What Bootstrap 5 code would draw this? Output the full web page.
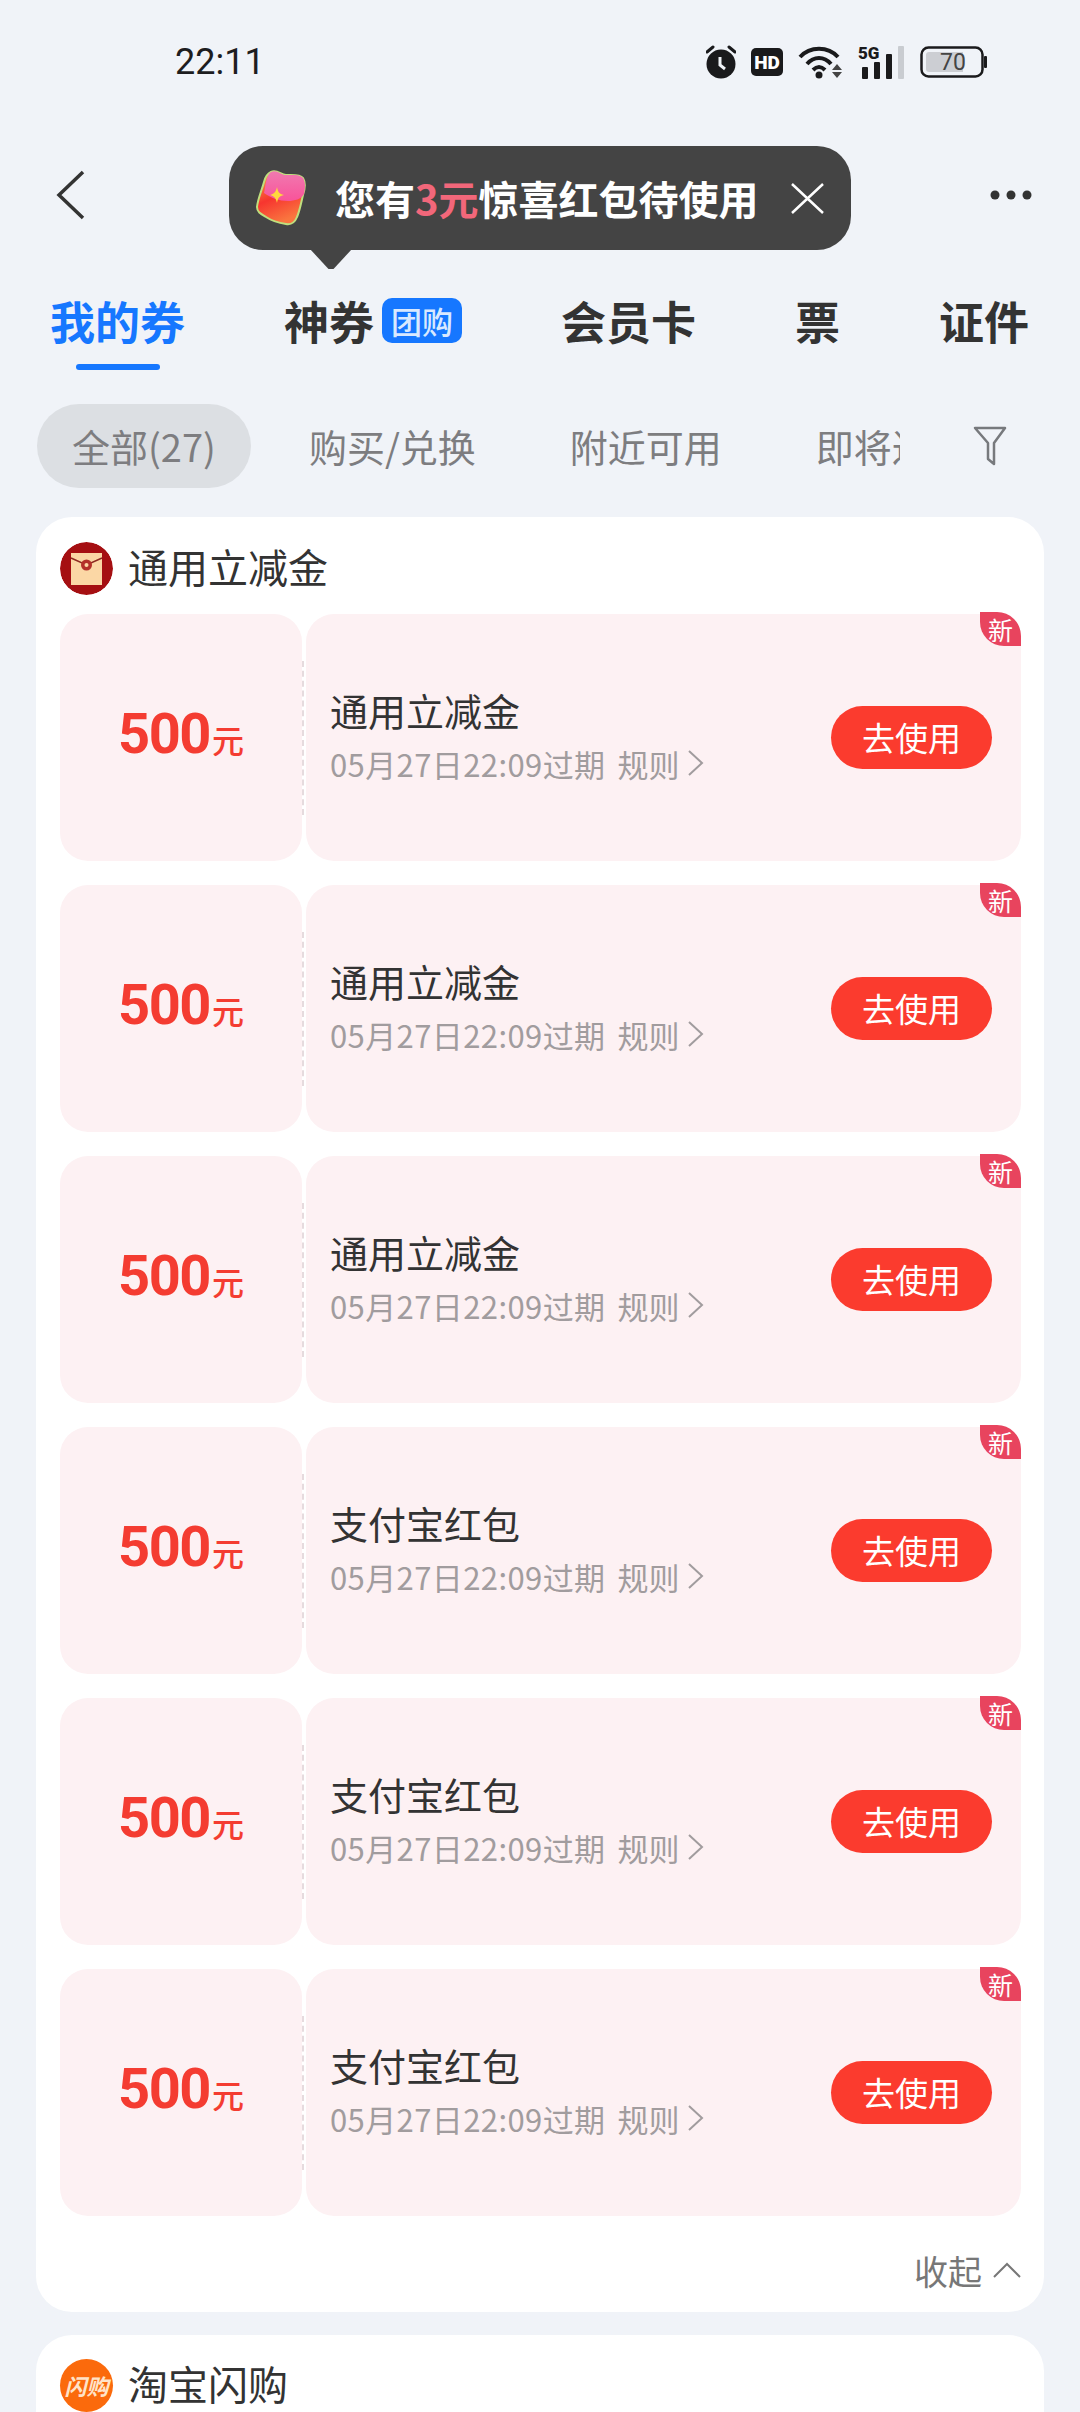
<!DOCTYPE html>
<html lang="zh-CN">
<head>
  <meta charset="UTF-8" />
  <title>我的券</title>
  <link href="https://cdn.jsdelivr.net/npm/bootstrap@5.3.0/dist/css/bootstrap.min.css" rel="stylesheet">
  <style>
    body {
      font-family: "Noto Sans CJK SC", "Noto Sans", sans-serif;
      background-color: #f0f3f8;
      color: #333;
    }

    .phone { width: 1080px; height: 2412px; overflow: hidden; }

    .status-bar { height: 124px; padding-left: 175px; padding-right: 93px; }
    .status-time { font-family: Roboto, sans-serif; font-size: 36px; color: #1d1d1f; }
    .status-icons { gap: 15px; }

    .title-bar { height: 142px; padding: 0 48px 0 55px; }

    .promo-tip {
      left: 229px; top: 22px; width: 622px; height: 104px;
      background: #444; border-radius: 34px; color: #fff;
      font-size: 40px; font-weight: 700; padding-left: 26px;
      white-space: nowrap; z-index: 2;
    }
    .promo-tip::after {
      content: ""; position: absolute; left: 81px; top: 103px;
      width: 42px; height: 20px; background: #444;
      clip-path: polygon(0 0, 100% 0, 56% 100%, 44% 100%);
    }
    .promo-tip em { font-style: normal; color: #f2677a; }
    .promo-text { margin-left: 28px; }
    .promo-close { margin-left: 31px; }

    .tab-row { padding-left: 50px; gap: 99px; height: 108px; white-space: nowrap; font-size: 45px; font-weight: 700; color: #333; }
    .tab-item { line-height: 1; }
    .tab-on { color: #1677ff; }
    .tab-on::after {
      content: ""; position: absolute; left: 26px; top: 66px;
      width: 84px; height: 6px; border-radius: 3px; background: #1677ff;
    }
    .tab-tag {
      width: 80px; height: 45px; margin-left: 8px; border-radius: 10px;
      background: #1677ff; color: #d9e9ff; font-size: 31px; font-weight: 500;
    }

    .filter-row { margin-top: 30px; height: 84px; padding-left: 37px; }
    .filter-scroll { width: 863px; gap: 22px; overflow: hidden; white-space: nowrap; font-size: 38px; color: #7d7d80; }
    .filter-item { padding: 0 36px; height: 84px; line-height: 84px; flex-shrink: 0; }
    .filter-on { background: #dcdfe3; border-radius: 42px; padding: 0 35px; }
    .filter-icon { margin-left: 73px; }

    .sec-box { margin: 29px 36px 0; border-radius: 36px; background: #fff; padding: 0 23px 0 24px; }
    .sec-head { height: 97px; gap: 15px; font-size: 40px; color: #333; padding-top: 5px; line-height: 1; }
    .sec-head span { padding-bottom: 5px; }
    .sec-logo { width: 53px; height: 53px; border-radius: 50%; flex-shrink: 0; }
    .sec-logo-sg { background: #fb6a0c; color: #ffe3c8; font-size: 22px; font-weight: 700; font-style: italic; }

    .coupon-list { gap: 24px; }
    .coupon-row { height: 247px; }
    .coupon-left {
      width: 242px; background: #fdf1f3; border-radius: 28px;
      color: #f43c31; padding-bottom: 8px;
    }
    .coupon-num { font-family: Roboto, sans-serif; font-size: 56px; font-weight: 700; letter-spacing: -1.5px; line-height: 1; }
    .coupon-unit { font-size: 32px; font-weight: 500; margin-left: 2px; line-height: 1; }
    .coupon-cut { width: 4px; height: 154px; align-self: center; border-left: 2px dashed #e6dbde; margin-left: 0; flex-shrink: 0; padding-left: 1px; }
    .coupon-right { background: #fdf1f3; border-radius: 28px; padding: 0 29px 0 24px; }
    .coupon-text { padding-bottom: 6px; }
    .coupon-name { font-size: 38px; color: #333; line-height: 1; margin-bottom: 19px; }
    .coupon-date { font-size: 31px; letter-spacing: .4px; color: #a19c9e; line-height: 1; white-space: nowrap; }
    .coupon-rule { margin-left: 12px; letter-spacing: 0; }
    .coupon-new {
      right: 0; top: -2px; width: 41px; height: 34px;
      background: #e8445e; color: #fff; font-size: 25px; line-height: 34px;
      text-align: center; border-radius: 0 24px 0 24px;
    }
    .coupon-btn {
      width: 161px; height: 63px; border: 0; border-radius: 32px; padding: 0;
      background: #fb3b2e; color: #fff; font-size: 33px; line-height: 63px;
    }

    .fold-row { height: 96px; gap: 11px; font-size: 34px; color: #777; padding-top: 12px; }

    .sec-box-next { margin-top: 23px; height: 120px; }
    .sec-box-next .sec-head { height: 100px; padding-top: 0; align-items: center; }
  </style>
</head>
<body>
<div class="phone">

  <!-- status bar -->
  <div class="status-bar d-flex align-items-center justify-content-between">
    <span class="status-time">22:11</span>
    <div class="status-icons d-flex align-items-center">
      <svg width="30" height="34" viewBox="0 0 30 34">
        <circle cx="15" cy="19" r="14.500" fill="#1a1a1c"/>
        <path d="M1 7 7 2M29 7 23 2" stroke="#1a1a1c" stroke-width="3" stroke-linecap="round"/>
        <path d="M14 12v8l5 4" fill="none" stroke="#f0f3f8" stroke-width="3"/>
      </svg>
      <svg width="32" height="28" viewBox="0 0 32 28">
        <rect width="32" height="28" rx="5" fill="#1a1a1c"/>
        <text x="16" y="21" text-anchor="middle" font-family="Roboto, sans-serif" font-size="19" font-weight="900" fill="#fff">HD</text>
      </svg>
      <svg width="45" height="34" viewBox="0 0 45 34">
        <path d="M2 12C12 1 30 1 40 12M9 19C16 11 26 11 33 19M15 25C19 21 23 21 27 25" fill="none" stroke="#1a1a1c" stroke-width="4"/>
        <circle cx="21" cy="30" r="3.500" fill="#1a1a1c"/>
        <path d="M39 19l5 6H34zM34 27h10l-5 6z" fill="#444"/>
      </svg>
      <svg width="47" height="34" viewBox="0 0 47 34">
        <text x="0" y="14" font-family="Roboto, sans-serif" font-size="17" font-weight="900" fill="#1a1a1c">5G</text>
        <rect x="4" y="22" width="6" height="12" rx="1" fill="#1a1a1c"/>
        <rect x="16" y="17" width="6" height="17" rx="1" fill="#1a1a1c"/>
        <rect x="28" y="9" width="6" height="25" rx="1" fill="#1a1a1c"/>
        <rect x="40" y="1" width="6" height="33" rx="1" fill="#c9ccd1"/>
      </svg>
      <svg width="67" height="32" viewBox="0 0 67 32">
        <rect x="1.500" y="1.500" width="61" height="29" rx="7" fill="none" stroke="#1a1a1c" stroke-width="2.500"/>
        <path d="M9 6h34v20H9a3 3 0 0 1-3-3V9a3 3 0 0 1 3-3z" fill="#ccced3"/>
        <rect x="64" y="10" width="3" height="12" rx="1" fill="#1a1a1c"/>
        <text x="33" y="24" text-anchor="middle" font-family="Roboto, sans-serif" font-size="23" fill="#444">70</text>
      </svg>
    </div>
  </div>

  <!-- title bar with the promo tip over it -->
  <div class="title-bar position-relative d-flex align-items-center justify-content-between">
    <svg width="30" height="50" viewBox="0 0 30 50">
      <path d="M28 2 4 25l24 23" fill="none" stroke="#333" stroke-width="3.500"/>
    </svg>
    <div class="promo-tip position-absolute d-flex align-items-center">
      <svg width="52" height="58" viewBox="0 0 52 58" class="flex-shrink-0">
        <defs>
          <linearGradient id="envBody" x1="0" y1="0" x2="0.4" y2="1">
            <stop offset="0" stop-color="#f8b043"/>
            <stop offset=".55" stop-color="#f7352f"/>
            <stop offset="1" stop-color="#f9763f"/>
          </linearGradient>
          <linearGradient id="envFlap" x1="0" y1="0" x2="0" y2="1">
            <stop offset="0" stop-color="#f07ab0"/>
            <stop offset="1" stop-color="#f9539a"/>
          </linearGradient>
        </defs>
        <path d="M16 3c6-3 10 3 15 3 6 0 14-1 17 3 3 5 2 11 0 17-2 8-3 15-6 22-2 5-5 8-11 7-7-1-14-3-20-7-5-3-9-5-9-10 1-9 5-17 7-25 1-4 3-8 7-10z" fill="url(#envBody)" stroke="#bfe07e" stroke-width="2"/>
        <path d="M16 3c6-3 10 3 15 3 6 0 14-1 17 3 3 5 2 11 1 16-3 5-9 7-16 7-9 0-17-3-24-8 1-4 1-7 2-11 1-4 2-8 5-10z" fill="url(#envFlap)"/>
        <path d="M22 18c1 5 2 7 7 8-5 1-6 3-7 8-1-5-3-7-7-8 4-1 6-3 7-8z" fill="#ffd93d"/>
      </svg>
      <span class="promo-text">您有<em>3元</em>惊喜红包待使用</span>
      <svg width="35" height="31" viewBox="0 0 35 31" class="promo-close flex-shrink-0">
        <path d="M2 1 33 30M33 1 2 30" stroke="#fff" stroke-width="2.500"/>
      </svg>
    </div>
    <svg width="42" height="12" viewBox="0 0 42 12">
      <circle cx="5" cy="6" r="4.500" fill="#333"/><circle cx="21" cy="6" r="4.500" fill="#333"/><circle cx="37" cy="6" r="4.500" fill="#333"/>
    </svg>
  </div>

  <!-- main tabs -->
  <div class="tab-row d-flex align-items-center">
    <div class="tab-item tab-on position-relative">我的券</div>
    <div class="tab-item d-flex align-items-center">神券<span class="tab-tag d-flex align-items-center justify-content-center">团购</span></div>
    <div class="tab-item">会员卡</div>
    <div class="tab-item">票</div>
    <div class="tab-item">证件</div>
  </div>

  <!-- filter chips -->
  <div class="filter-row d-flex align-items-center">
    <div class="filter-scroll d-flex">
      <div class="filter-item filter-on">全部(27)</div>
      <div class="filter-item">购买/兑换</div>
      <div class="filter-item">附近可用</div>
      <div class="filter-item">即将过期</div>
    </div>
    <svg class="filter-icon flex-shrink-0" width="34" height="40" viewBox="0 0 34 40">
      <path d="M2 2h30L21 17v21l-6-5V17z" fill="none" stroke="#77797d" stroke-width="2.500" stroke-linejoin="round"/>
    </svg>
  </div>

  <!-- coupons section -->
  <div class="sec-box">
    <div class="sec-head d-flex align-items-center">
      <svg class="sec-logo" viewBox="0 0 53 53">
        <circle cx="26.500" cy="26.500" r="26.500" fill="#a50f12"/>
        <rect x="11" y="11" width="31" height="32" fill="#fbd7a5"/>
        <path d="M11 16 26.500 23 42 16" fill="none" stroke="#8e2a22" stroke-width="1.500"/>
        <circle cx="26.500" cy="23" r="5.500" fill="#b4302a"/>
        <circle cx="26.500" cy="23" r="2" fill="#fbd7a5"/>
      </svg>
      <span>通用立减金</span>
    </div>
    <div id="couponList" class="coupon-list d-flex flex-column"></div>
    <div class="fold-row d-flex align-items-center justify-content-end">
      <span>收起</span>
      <svg width="28" height="16" viewBox="0 0 28 16"><path d="M1 15 14 2l13 13" fill="none" stroke="#777" stroke-width="2"/></svg>
    </div>
  </div>

  <div class="sec-box sec-box-next">
    <div class="sec-head d-flex">
      <div class="sec-logo sec-logo-sg d-flex align-items-center justify-content-center">闪购</div>
      <span>淘宝闪购</span>
    </div>
  </div>

</div>

<script src="https://cdn.jsdelivr.net/npm/bootstrap@5.3.0/dist/js/bootstrap.bundle.min.js"></script>
<script>
  const names = ["通用立减金", "通用立减金", "通用立减金", "支付宝红包", "支付宝红包", "支付宝红包"];
  document.getElementById("couponList").innerHTML = names.map(name => `
    <div class="coupon-row d-flex">
      <div class="coupon-left d-flex align-items-center justify-content-center flex-shrink-0">
        <div class="d-flex align-items-baseline"><span class="coupon-num">500</span><span class="coupon-unit">元</span></div>
      </div>
      <div class="coupon-cut"></div>
      <div class="coupon-right position-relative flex-grow-1 d-flex align-items-center justify-content-between">
        <div class="coupon-text">
          <div class="coupon-name">${name}</div>
          <div class="coupon-date d-flex align-items-center">05月27日22:09过期<span class="coupon-rule">规则</span>
            <svg class="ms-2" width="18" height="28" viewBox="0 0 18 28"><path d="M2 2l13 12L2 26" fill="none" stroke="#a19c9e" stroke-width="2"/></svg>
          </div>
        </div>
        <button class="btn coupon-btn flex-shrink-0">去使用</button>
        <span class="coupon-new position-absolute">新</span>
      </div>
    </div>`).join("");
</script>
</body>
</html>
